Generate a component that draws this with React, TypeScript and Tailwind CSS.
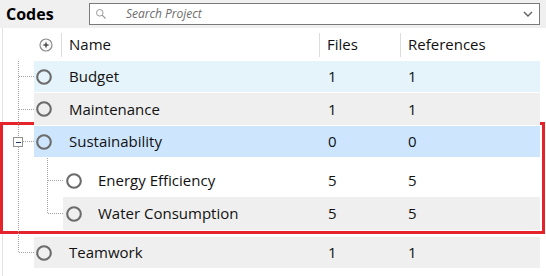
import React from 'react';

interface CodeItem {
  name: string;
  files: number;
  refs: number;
  child?: boolean;
  bg: string;
  className?: string;
}

function RingIcon() {
  return (
    <svg width="16" height="16" viewBox="0 0 16 16" className="shrink-0">
      <circle cx="8" cy="8" r="6.8" fill="none" stroke="#6b6b6b" strokeWidth="2.1" />
    </svg>
  );
}

function HeaderIcon() {
  return (
    <svg width="14" height="14" viewBox="0 0 14 14" className="shrink-0">
      <circle cx="7" cy="7" r="6" fill="#fafafa" stroke="#8c8c8c" strokeWidth="1.2" />
      <path d="M7 3.4 L8 6 L10.6 7 L8 8 L7 10.6 L6 8 L3.4 7 L6 6 Z" fill="#555" />
    </svg>
  );
}

function CodeRow({ name, files, refs, child, bg, className = '' }: CodeItem) {
  return (
    <div className={`flex ${className}`}>
      <div className={child ? 'w-[60px] shrink-0' : 'w-[31px] shrink-0'} />
      <div className={`flex items-center ${bg} ${child ? 'w-[477px]' : 'w-[506px]'}`}>
        <div className={child ? 'ml-[3px]' : 'ml-[2px]'}>
          <RingIcon />
        </div>
        <span className={child ? 'ml-[16px] w-[229px]' : 'ml-[17px] w-[258px]'}>{name}</span>
        <span className="w-[81px] pl-[1px]">{files}</span>
        <span className="flex-1">{refs}</span>
      </div>
    </div>
  );
}

// dotted connectors of the tree
function TreeLines() {
  const dot = { stroke: '#a3a3a3', strokeWidth: 1, strokeDasharray: '1 1', shapeRendering: 'crispEdges' as const };
  return (
    <svg className="absolute left-0 top-0 pointer-events-none" width="546" height="276">
      <line x1="18.5" y1="61" x2="18.5" y2="253" {...dot} />
      <line x1="19" y1="76.5" x2="34" y2="76.5" {...dot} />
      <line x1="19" y1="109.5" x2="34" y2="109.5" {...dot} />
      <line x1="23" y1="141.5" x2="34" y2="141.5" {...dot} />
      <line x1="19" y1="252.5" x2="34" y2="252.5" {...dot} />
      <line x1="47.5" y1="158" x2="47.5" y2="213.5" {...dot} />
      <line x1="48" y1="180.5" x2="63" y2="180.5" {...dot} />
      <line x1="48" y1="213.5" x2="63" y2="213.5" {...dot} />
      <rect x="13.5" y="137.5" width="9" height="9" fill="#fff" stroke="#929292" />
      <line x1="15.5" y1="142" x2="20.5" y2="142" stroke="#1f3a66" strokeWidth="1" shapeRendering="crispEdges" />
    </svg>
  );
}

export default function App() {
  return (
    <div className="relative w-[546px] h-[276px] overflow-hidden bg-white text-[15px] text-[#111] font-['Open_Sans',sans-serif]">
      {/* Title bar with search */}
      <div className="flex items-center h-[28px] bg-[#f0f0f0]">
        <span className="ml-[6px] w-[83px] text-[16px] font-bold text-black">Codes</span>
        <div className="flex items-center w-[451px] h-[22px] border border-[#7a7a7a] bg-white">
          <svg width="12" height="12" viewBox="0 0 12 12" className="ml-[5px]">
            <circle cx="4.8" cy="4.8" r="3.3" fill="none" stroke="#9a9a9a" strokeWidth="1" />
            <line x1="7.2" y1="7.2" x2="10.5" y2="10.5" stroke="#9a9a9a" strokeWidth="1.2" />
          </svg>
          <span className="ml-[19px] flex-1 text-[12px] italic text-[#6d6d6d]">Search Project</span>
          <svg width="10" height="6" viewBox="0 0 10 6" className="mr-[6px]">
            <path d="M1 1 L5 5 L9 1" fill="none" stroke="#606060" strokeWidth="1.4" />
          </svg>
        </div>
      </div>

      {/* Tree list */}
      <div className="ml-[2px] border-l border-[#e3e3e3] h-[248px]">
        <div className="flex items-center h-[33px]">
          <div className="w-[31px] shrink-0" />
          <div className="w-[27px] pl-[5px]">
            <HeaderIcon />
          </div>
          <div className="w-[258px] h-[24px] flex items-center border-l border-[#dcdcdc] pl-[7px]">Name</div>
          <div className="w-[81px] h-[24px] flex items-center border-l border-[#dcdcdc] pl-[7px]">Files</div>
          <div className="flex-1 h-[24px] flex items-center border-l border-[#dcdcdc] pl-[7px]">References</div>
        </div>

        <CodeRow name="Budget" files={1} refs={1} bg="bg-[#e5f3fb]" className="h-[31px]" />
        <CodeRow name="Maintenance" files={1} refs={1} bg="bg-[#efefef]" className="h-[32px] mt-[1px]" />

        <div className="-ml-[3px] -mt-[3px] w-[545px] border-[3px] border-[#e4232b] pt-[1px] pb-[1px]">
          <CodeRow name="Sustainability" files={0} refs={0} bg="bg-[#cde6fd]" className="h-[31px]" />
          <CodeRow name="Energy Efficiency" files={5} refs={5} child bg="bg-white" className="h-[33px] mt-[7px]" />
          <CodeRow name="Water Consumption" files={5} refs={5} child bg="bg-[#efefef]" className="h-[33px]" />
        </div>

        <CodeRow name="Teamwork" files={1} refs={1} bg="bg-[#efefef]" className="h-[31px] mt-[3px]" />
      </div>

      <TreeLines />
    </div>
  );
}
